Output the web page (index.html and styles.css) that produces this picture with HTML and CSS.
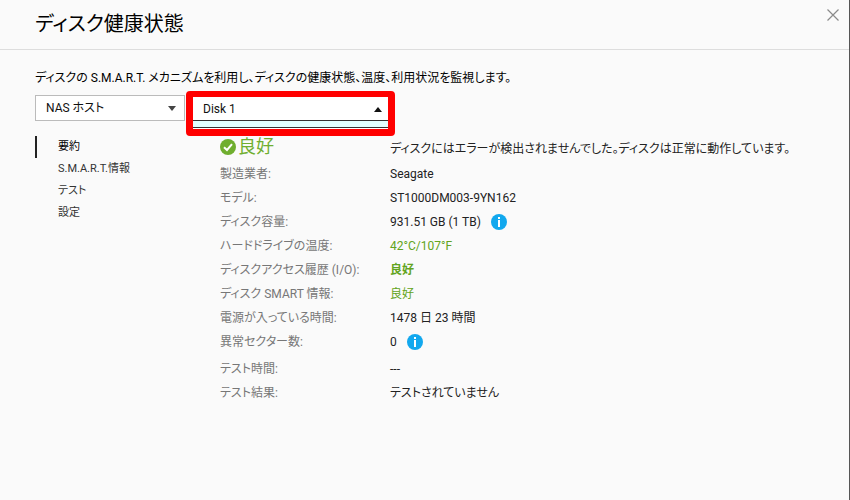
FILE: index.html
```html
<!DOCTYPE html>
<html lang="ja">
<head>
    <meta charset="UTF-8">
    <meta name="viewport" content="width=device-width, initial-scale=1.0">
    <title>ディスク健康状態</title>
    <link rel="stylesheet" href="styles.css">
</head>
<body>
    <div class="dialog">
        <header class="dialog-header">
            <h1>ディスク健康状態</h1>
            <button class="close-button" type="button" aria-label="閉じる">
                <svg width="12" height="12" viewBox="0 0 12 12">
                    <path d="M0.5 0.5L11.5 11.5M11.5 0.5L0.5 11.5" fill="none" stroke="#8a8a8a" stroke-width="1.2"/>
                </svg>
            </button>
        </header>

        <main class="dialog-body">
            <p class="description">ディスクの S.M.A.R.T. メカニズムを利用し、ディスクの健康状態、温度、利用状況を監視します。</p>

            <div class="selectors">
                <div class="select-box">
                    <select aria-label="ホスト">
                        <option>NAS ホスト</option>
                    </select>
                    <svg class="arrow" width="8" height="5" viewBox="0 0 8 5"><path d="M0 0H8L4 5Z" fill="#444"/></svg>
                </div>
                <div class="disk-picker">
                    <div class="select-box open">
                        <select aria-label="ディスク">
                            <option>Disk 1</option>
                        </select>
                        <svg class="arrow" width="8" height="5" viewBox="0 0 8 5"><path d="M0 5H8L4 0Z" fill="#111"/></svg>
                    </div>
                    <div class="disk-list"></div>
                </div>
            </div>

            <div class="columns">
                <nav class="tabs">
                    <a href="#summary" class="active">要約</a>
                    <a href="#smart">S.M.A.R.T.情報</a>
                    <a href="#test">テスト</a>
                    <a href="#settings">設定</a>
                </nav>

                <table class="summary" id="summary">
                    <tbody>
                        <tr class="status">
                            <th scope="row">
                                <span class="status-label">
                                    <svg width="16" height="16" viewBox="0 0 16 16">
                                        <circle cx="8" cy="8" r="8" fill="#6fae2f"/>
                                        <path d="M4 8.2L7 11L12 5.2" fill="none" stroke="#fff" stroke-width="2"/>
                                    </svg>
                                    良好
                                </span>
                            </th>
                            <td>ディスクにはエラーが検出されませんでした。ディスクは正常に動作しています。</td>
                        </tr>
                        <tr><th scope="row">製造業者:</th><td>Seagate</td></tr>
                        <tr><th scope="row">モデル:</th><td>ST1000DM003-9YN162</td></tr>
                        <tr>
                            <th scope="row">ディスク容量:</th>
                            <td>
                                <span class="with-info">931.51 GB (1 TB)
                                    <button class="info-button" type="button" aria-label="容量の情報">
                                        <svg width="16" height="16" viewBox="0 0 16 16">
                                            <circle cx="8" cy="8" r="8" fill="#12a8ee"/>
                                            <path d="M7 3H9V5H7ZM7 6H9V13H7Z" fill="#fff"/>
                                        </svg>
                                    </button>
                                </span>
                            </td>
                        </tr>
                        <tr><th scope="row">ハードドライブの温度:</th><td class="good">42°C/107°F</td></tr>
                        <tr><th scope="row">ディスクアクセス履歴 (I/O):</th><td class="good strong">良好</td></tr>
                        <tr><th scope="row">ディスク SMART 情報:</th><td class="good">良好</td></tr>
                        <tr><th scope="row">電源が入っている時間:</th><td>1478 日 23 時間</td></tr>
                        <tr>
                            <th scope="row">異常セクター数:</th>
                            <td>
                                <span class="with-info">0
                                    <button class="info-button" type="button" aria-label="セクターの情報">
                                        <svg width="16" height="16" viewBox="0 0 16 16">
                                            <circle cx="8" cy="8" r="8" fill="#12a8ee"/>
                                            <path d="M7 3H9V5H7ZM7 6H9V13H7Z" fill="#fff"/>
                                        </svg>
                                    </button>
                                </span>
                            </td>
                        </tr>
                    </tbody>
                    <tbody class="test-rows">
                        <tr><th scope="row">テスト時間:</th><td>---</td></tr>
                        <tr><th scope="row">テスト結果:</th><td>テストされていません</td></tr>
                    </tbody>
                </table>
            </div>
        </main>
    </div>
</body>
</html>
```

FILE: styles.css
```css
* {
    box-sizing: border-box;
    margin: 0;
    padding: 0;
}

body {
    font-family: Roboto, "Noto Sans CJK JP", sans-serif;
    font-size: 12px;
    line-height: 24px;
    font-feature-settings: "palt";
    color: #222;
    background-color: #fafafa;
}

button {
    border: none;
    background: none;
    cursor: pointer;
}

svg {
    display: block;
}

.dialog {
    min-height: 100vh;
    border-right: 1px solid #555;
}

/* Header */
.dialog-header {
    display: flex;
    align-items: flex-start;
    justify-content: space-between;
    height: 50px;
    padding: 8px 9px 0 35px;
    border-bottom: 1px solid #ddd;
}

.dialog-header h1 {
    font-size: 20px;
    font-weight: 400;
    line-height: 32px;
    color: #000;
}

.close-button {
    padding: 1px;
}

.dialog-body {
    padding: 16px 35px;
}

.description {
    color: #000;
}

/* Drop-downs */
.selectors {
    display: flex;
    align-items: flex-start;
    gap: 1px;
    height: 45px;
    margin-top: 1px;
}

.select-box {
    display: grid;
    align-items: center;
    width: 150px;
    height: 26px;
    margin-top: 4px;
    background-color: #fff;
    border: 1px solid #bbb;
}

.select-box select,
.select-box .arrow {
    grid-area: 1 / 1;
}

.select-box select {
    width: 100%;
    height: 100%;
    padding-left: 10px;
    border: none;
    outline: none;
    appearance: none;
    background: transparent;
    font: inherit;
    font-feature-settings: inherit;
    color: #111;
}

.select-box .arrow {
    justify-self: end;
    margin-right: 8px;
    pointer-events: none;
}

.disk-picker {
    width: 209px;
    border: 7px solid #f00;
    border-top-width: 6px;
    border-radius: 4px;
    background-color: #fff;
}

.select-box.open {
    width: 100%;
    height: 23px;
    margin: 0;
    border: none;
}

.select-box.open .arrow {
    margin-right: 6px;
}

.disk-list {
    height: 8px;
    margin-bottom: 1px;
    border-top: 1px solid #333;
    border-bottom: 1px solid #333;
    background-color: #e0ffff;
}

/* Side tabs and summary */
.columns {
    display: flex;
    align-items: flex-start;
}

.tabs {
    display: flex;
    flex-direction: column;
    flex: 0 0 185px;
}

.tabs a {
    padding-left: 21px;
    border-left: 2px solid transparent;
    line-height: 22px;
    font-size: 11px;
    color: #333;
    text-decoration: none;
}

.tabs a.active {
    border-left-color: #222;
    color: #000;
}

.summary {
    flex: 1;
    border-collapse: collapse;
}

.summary th {
    width: 170px;
    font-weight: 400;
    text-align: left;
    color: #777;
}

.summary th,
.summary td {
    height: 24px;
}

.summary .status th {
    height: 26px;
    vertical-align: top;
}

.status-label {
    display: flex;
    align-items: center;
    gap: 2px;
    font-size: 18px;
    line-height: 22px;
    color: #6fae2f;
}

.with-info {
    display: flex;
    align-items: center;
    gap: 10px;
}

.summary .good {
    color: #62a420;
}

.summary .strong {
    font-weight: 700;
}

.test-rows::before {
    content: "";
    display: table-row;
    height: 3px;
}
```
